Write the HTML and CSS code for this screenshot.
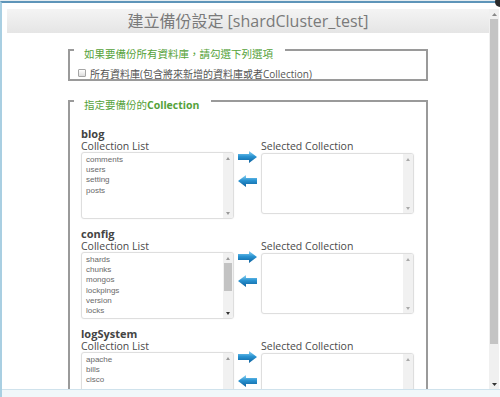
FILE: index.html
```html
<!DOCTYPE html>
<html lang="zh-Hant">
<head>
    <meta charset="UTF-8">
    <title>建立備份設定</title>
    <link rel="stylesheet" href="styles.css">
</head>
<body>
    <div class="dialog">
        <span class="close-btn"></span>
        <div class="dialog-body">
            <div class="content">
                <div class="title-bar">建立備份設定 [shardCluster_test]</div>

                <fieldset class="group all-db">
                    <legend>如果要備份所有資料庫，請勾選下列選項</legend>
                    <label class="check-row"><span class="check"></span>所有資料庫(包含將來新增的資料庫或者Collection)</label>
                </fieldset>

                <fieldset class="group pick">
                    <legend>指定要備份的<b>Collection</b></legend>

                    <div class="db">
                        <div class="db-name">blog</div>
                        <div class="db-row">
                            <div class="col">
                                <div class="col-label">Collection List</div>
                                <div class="listbox">
                                    <ul class="items">
                                        <li>comments</li>
                                        <li>users</li>
                                        <li>setting</li>
                                        <li>posts</li>
                                    </ul>
                                    <div class="mini-sb">
                                        <span class="mini-btn"><svg width="4" height="3" viewBox="0 0 4 3"><polygon points="0,3 2,0 4,3" fill="#999"/></svg></span>
                                        <span class="mini-track"></span>
                                        <span class="mini-btn"><svg width="4" height="3" viewBox="0 0 4 3"><polygon points="0,0 4,0 2,3" fill="#999"/></svg></span>
                                    </div>
                                </div>
                            </div>
                            <div class="movers">
                                <svg class="arrow" width="19" height="12" viewBox="0 0 19 12"><defs><linearGradient id="ga" x1="0" y1="0" x2="0" y2="1"><stop offset="0" stop-color="#8fd3f3"/><stop offset="0.45" stop-color="#2a94d2"/><stop offset="1" stop-color="#0b5f9c"/></linearGradient></defs><polygon points="0,3 11,3 11,0 19,6 11,12 11,9 0,9" fill="url(#ga)"/></svg>
                                <svg class="arrow" width="19" height="12" viewBox="0 0 19 12"><polygon points="19,3 8,3 8,0 0,6 8,12 8,9 19,9" fill="url(#ga)"/></svg>
                            </div>
                            <div class="col">
                                <div class="col-label">Selected Collection</div>
                                <div class="listbox short">
                                    <ul class="items"></ul>
                                    <div class="mini-sb">
                                        <span class="mini-btn"><svg width="4" height="3" viewBox="0 0 4 3"><polygon points="0,3 2,0 4,3" fill="#aaa"/></svg></span>
                                        <span class="mini-track"></span>
                                        <span class="mini-btn"><svg width="4" height="3" viewBox="0 0 4 3"><polygon points="0,0 4,0 2,3" fill="#aaa"/></svg></span>
                                    </div>
                                </div>
                            </div>
                        </div>
                    </div>

                    <div class="db">
                        <div class="db-name">config</div>
                        <div class="db-row">
                            <div class="col">
                                <div class="col-label">Collection List</div>
                                <div class="listbox">
                                    <ul class="items">
                                        <li>shards</li>
                                        <li>chunks</li>
                                        <li>mongos</li>
                                        <li>lockpings</li>
                                        <li>version</li>
                                        <li>locks</li>
                                        <li>databases</li>
                                    </ul>
                                    <div class="mini-sb">
                                        <span class="mini-btn"><svg width="4" height="3" viewBox="0 0 4 3"><polygon points="0,3 2,0 4,3" fill="#999"/></svg></span>
                                        <span class="mini-thumb"></span>
                                        <span class="mini-track"></span>
                                        <span class="mini-btn"><svg width="4" height="3" viewBox="0 0 4 3"><polygon points="0,0 4,0 2,3" fill="#333"/></svg></span>
                                    </div>
                                </div>
                            </div>
                            <div class="movers">
                                <svg class="arrow" width="19" height="12" viewBox="0 0 19 12"><polygon points="0,3 11,3 11,0 19,6 11,12 11,9 0,9" fill="url(#ga)"/></svg>
                                <svg class="arrow" width="19" height="12" viewBox="0 0 19 12"><polygon points="19,3 8,3 8,0 0,6 8,12 8,9 19,9" fill="url(#ga)"/></svg>
                            </div>
                            <div class="col">
                                <div class="col-label">Selected Collection</div>
                                <div class="listbox short">
                                    <ul class="items"></ul>
                                    <div class="mini-sb">
                                        <span class="mini-btn"><svg width="4" height="3" viewBox="0 0 4 3"><polygon points="0,3 2,0 4,3" fill="#aaa"/></svg></span>
                                        <span class="mini-track"></span>
                                        <span class="mini-btn"><svg width="4" height="3" viewBox="0 0 4 3"><polygon points="0,0 4,0 2,3" fill="#aaa"/></svg></span>
                                    </div>
                                </div>
                            </div>
                        </div>
                    </div>

                    <div class="db">
                        <div class="db-name">logSystem</div>
                        <div class="db-row">
                            <div class="col">
                                <div class="col-label">Collection List</div>
                                <div class="listbox">
                                    <ul class="items">
                                        <li>apache</li>
                                        <li>bills</li>
                                        <li>cisco</li>
                                    </ul>
                                    <div class="mini-sb">
                                        <span class="mini-btn"><svg width="4" height="3" viewBox="0 0 4 3"><polygon points="0,3 2,0 4,3" fill="#999"/></svg></span>
                                        <span class="mini-track"></span>
                                        <span class="mini-btn"><svg width="4" height="3" viewBox="0 0 4 3"><polygon points="0,0 4,0 2,3" fill="#999"/></svg></span>
                                    </div>
                                </div>
                            </div>
                            <div class="movers">
                                <svg class="arrow" width="19" height="12" viewBox="0 0 19 12"><polygon points="0,3 11,3 11,0 19,6 11,12 11,9 0,9" fill="url(#ga)"/></svg>
                                <svg class="arrow" width="19" height="12" viewBox="0 0 19 12"><polygon points="19,3 8,3 8,0 0,6 8,12 8,9 19,9" fill="url(#ga)"/></svg>
                            </div>
                            <div class="col">
                                <div class="col-label">Selected Collection</div>
                                <div class="listbox short">
                                    <ul class="items"></ul>
                                    <div class="mini-sb">
                                        <span class="mini-btn"><svg width="4" height="3" viewBox="0 0 4 3"><polygon points="0,3 2,0 4,3" fill="#aaa"/></svg></span>
                                        <span class="mini-track"></span>
                                        <span class="mini-btn"><svg width="4" height="3" viewBox="0 0 4 3"><polygon points="0,0 4,0 2,3" fill="#aaa"/></svg></span>
                                    </div>
                                </div>
                            </div>
                        </div>
                    </div>
                </fieldset>
            </div>
            <div class="vscroll">
                <span class="sb-btn"><svg width="5" height="3" viewBox="0 0 5 3"><polygon points="0,3 2.5,0 5,3" fill="#888"/></svg></span>
                <span class="sb-thumb"></span>
                <span class="sb-track"></span>
                <span class="sb-btn"><svg width="5" height="3" viewBox="0 0 5 3"><polygon points="0,0 5,0 2.5,3" fill="#333"/></svg></span>
            </div>
        </div>
        <div class="dialog-foot"></div>
    </div>
</body>
</html>
```

FILE: styles.css
```css
body { margin: 0; height: 397px; box-sizing: border-box; padding-top: 1px; overflow: hidden; background: #e6edf1; font-family: "Open Sans", "Noto Sans CJK TC", sans-serif; }
.dialog { position: relative; height: 396px; box-sizing: border-box; background: #fff; border-top: 2px solid #5e95b9; border-left: 2px solid #a9cfe2; display: flex; flex-direction: column; }
.close-btn { position: absolute; right: -5px; top: -6px; width: 10px; height: 10px; border-radius: 50%; background: #2b2b2b; }
.dialog-body { flex: 1; min-height: 0; display: flex; padding: 6px 1px 0 5px; }
.dialog-foot { height: 7px; background: #f1f7fa; border-top: 1px solid #cfe2ec; }
.content { flex: 1; min-width: 0; overflow: hidden; }

.title-bar { height: 24px; line-height: 24px; text-align: center; font-size: 16px; color: #7a7a7a; background: linear-gradient(#f4f4f4, #e5e5e5); }

.group { box-sizing: border-box; width: 360px; margin: 0 auto; border: 2px solid #9a9a9a; }
.group legend { padding: 8px 12px 0 10px; line-height: 12px; font-size: 10.5px; color: #55a23a; }
.all-db { margin-top: 7px; padding: 7px 6px 0 8px; }
.all-db legend { margin-left: -4px; }
.check-row { display: flex; align-items: center; height: 12px; font-size: 10px; color: #555; }
.check { width: 6px; height: 6px; margin-right: 4px; border: 1px solid #a5a5a5; border-radius: 1px; background: linear-gradient(#fff, #dcdcdc); }

.pick { margin-top: 10px; padding: 16px 10px 0 11px; }
.pick legend { margin-left: -7px; }
.db { margin-bottom: 8px; }
.db-name { font-size: 11px; line-height: 13px; font-weight: bold; color: #444; }
.db-row { display: flex; }
.col { width: 153px; }
.col-label { font-size: 10.5px; line-height: 12px; color: #4a4a4a; white-space: nowrap; }
.listbox { display: flex; height: 67px; box-sizing: border-box; border: 1px solid #dedede; border-radius: 3px; background: #fff; overflow: hidden; box-shadow: 0 0 2px rgba(0,0,0,0.06); }
.listbox.short { height: 61px; margin-top: 1px; }
.items { flex: 1; margin: 0; padding: 2px 4px; list-style: none; font-family: "Liberation Sans", sans-serif; font-size: 8px; line-height: 10.2px; color: #6a6a6a; overflow: hidden; }
.mini-sb { width: 10px; background: #f1f1f1; display: flex; flex-direction: column; align-items: center; }
.mini-btn { height: 10px; display: flex; align-items: center; justify-content: center; }
.mini-thumb { width: 8px; height: 28px; background: #c3c3c3; }
.mini-track { flex: 1; }
.movers { width: 27px; padding-top: 11px; display: flex; flex-direction: column; gap: 12px; }
.arrow { display: block; margin-left: 4px; }

.vscroll { width: 10px; background: #f0f0f0; display: flex; flex-direction: column; align-items: center; }
.sb-btn { height: 10px; display: flex; align-items: center; justify-content: center; }
.sb-thumb { width: 8px; height: 325px; background: #c4c4c4; }
.sb-track { flex: 1; }
```
